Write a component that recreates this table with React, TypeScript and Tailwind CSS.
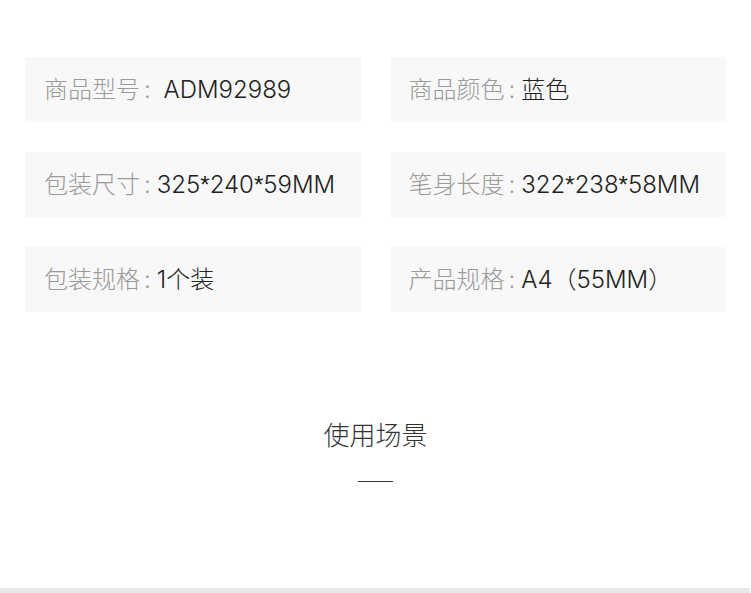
import React from "react";

const items: { label: string; value: string }[] = [
  { label: "商品型号", value: " ADM92989" },
  { label: "商品颜色", value: "蓝色" },
  { label: "包装尺寸", value: "325*240*59MM" },
  { label: "笔身长度", value: "322*238*58MM" },
  { label: "包装规格", value: "1个装" },
  { label: "产品规格", value: "A4（55MM）" },
];

function Value({ text }: { text: string }) {
  const parts = text.split("*");
  return (
    <span className="text-[#222] whitespace-pre">
      {parts.map((p, i) => (
        <React.Fragment key={i}>
          {i > 0 && (
            <span style={{ fontFamily: "'Liberation Sans', sans-serif" }}>*</span>
          )}
          {p}
        </React.Fragment>
      ))}
    </span>
  );
}

export default function App() {
  return (
    <div
      className="w-[751px] h-[593px] bg-white overflow-hidden flex flex-col"
      style={{ fontFamily: "Inter, 'Noto Sans CJK SC', sans-serif" }}
    >
      <div className="pt-[57px] px-[25px] grid grid-cols-2 gap-x-[28px] gap-y-[30px]">
        {items.map((it) => (
          <div
            key={it.label}
            className="h-[65px] bg-[#f8f8f8] flex items-center pl-[19px] text-[24px] leading-none font-light"
          >
            <span className="shrink-0 text-[#9a9a9a] whitespace-nowrap">{it.label}</span>
            <span className="shrink-0 ml-[4px] mr-[6px] text-[#9a9a9a]">:</span>
            <Value text={it.value} />
          </div>
        ))}
      </div>
      <div className="mt-[107px] flex flex-col items-center">
        <div className="text-[26px] leading-[34px] text-[#333] font-light">使用场景</div>
        <div className="mt-[28px] w-[35px] h-[1px] bg-[#333]" />
      </div>
      <div className="flex-1" />
      <div className="h-[5px] bg-[#e8e8e8] mr-[1px]" />
    </div>
  );
}
